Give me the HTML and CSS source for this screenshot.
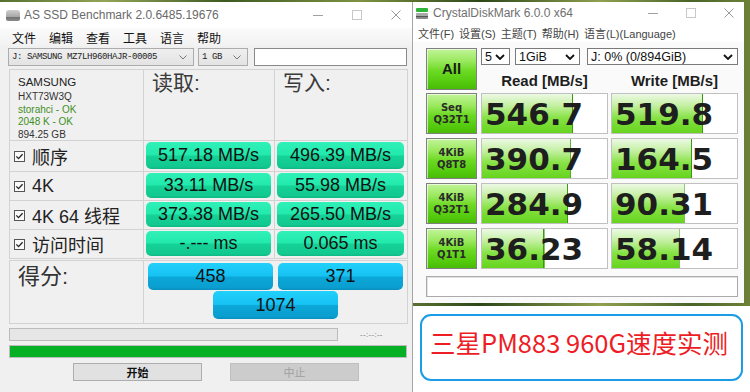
FILE: index.html
```html
<!DOCTYPE html>
<html>
<head>
<meta charset="utf-8">
<link rel="stylesheet" href="styles.css">
</head>
<body>
<div class="desktop">
  <div class="asssd">
    <div class="as-title">
      <span class="as-icon"></span>
      <span class="title">AS SSD Benchmark 2.0.6485.19676</span>
      <div class="controls">
        <span class="ctl-min"></span>
        <span class="ctl-max"></span>
        <svg class="ctl-close" viewBox="0 0 10 10" width="10" height="10"><path d="M0.5 0.5L9.5 9.5M9.5 0.5L0.5 9.5" stroke="#9a9a9a" stroke-width="1"/></svg>
      </div>
    </div>
    <div class="as-menu">
      <span>文件</span><span>编辑</span><span>查看</span><span>工具</span><span>语言</span><span>帮助</span>
    </div>
    <div class="as-tools">
      <div class="combo drive"><span>J: SAMSUNG MZ7LH960HAJR-00005</span><svg class="chev" viewBox="0 0 8 5" width="8" height="5"><path d="M0.5 0.5L4 4L7.5 0.5" fill="none" stroke="#777"/></svg></div>
      <div class="combo size"><span>1 GB</span><svg class="chev" viewBox="0 0 8 5" width="8" height="5"><path d="M0.5 0.5L4 4L7.5 0.5" fill="none" stroke="#777"/></svg></div>
      <div class="textbox"></div>
    </div>
    <div class="as-grid">
      <div class="cell info">
        <div class="i-model">SAMSUNG</div>
        <div class="i-line">HXT73W3Q</div>
        <div class="i-line ok">storahci - OK</div>
        <div class="i-line ok">2048 K - OK</div>
        <div class="i-line">894.25 GB</div>
      </div>
      <div class="cell head">读取:</div>
      <div class="cell head">写入:</div>

      <div class="cell label"><svg class="chk" viewBox="0 0 11 11" width="11" height="11"><rect x="0.5" y="0.5" width="10" height="10" fill="#fafafa" stroke="#555"/><path d="M2.3 5.4L4.5 7.6L8.6 3.2" fill="none" stroke="#222" stroke-width="1.3"/></svg><span>顺序</span></div>
      <div class="cell vcell"><div class="val">517.18 MB/s</div></div>
      <div class="cell vcell"><div class="val">496.39 MB/s</div></div>

      <div class="cell label"><svg class="chk" viewBox="0 0 11 11" width="11" height="11"><rect x="0.5" y="0.5" width="10" height="10" fill="#fafafa" stroke="#555"/><path d="M2.3 5.4L4.5 7.6L8.6 3.2" fill="none" stroke="#222" stroke-width="1.3"/></svg><span>4K</span></div>
      <div class="cell vcell"><div class="val">33.11 MB/s</div></div>
      <div class="cell vcell"><div class="val">55.98 MB/s</div></div>

      <div class="cell label"><svg class="chk" viewBox="0 0 11 11" width="11" height="11"><rect x="0.5" y="0.5" width="10" height="10" fill="#fafafa" stroke="#555"/><path d="M2.3 5.4L4.5 7.6L8.6 3.2" fill="none" stroke="#222" stroke-width="1.3"/></svg><span>4K 64 线程</span></div>
      <div class="cell vcell"><div class="val">373.38 MB/s</div></div>
      <div class="cell vcell"><div class="val">265.50 MB/s</div></div>

      <div class="cell label"><svg class="chk" viewBox="0 0 11 11" width="11" height="11"><rect x="0.5" y="0.5" width="10" height="10" fill="#fafafa" stroke="#555"/><path d="M2.3 5.4L4.5 7.6L8.6 3.2" fill="none" stroke="#222" stroke-width="1.3"/></svg><span>访问时间</span></div>
      <div class="cell vcell"><div class="val">-.--- ms</div></div>
      <div class="cell vcell"><div class="val">0.065 ms</div></div>
    </div>
    <div class="as-score">
      <div class="cell score-label">得分:</div>
      <div class="cell score-vals">
        <div class="sval">458</div>
        <div class="sval">371</div>
        <div class="sval total">1074</div>
      </div>
    </div>
    <div class="as-prog">
      <div class="pbar"></div>
      <span class="ptime">--:--:--</span>
    </div>
    <div class="greenbar"></div>
    <div class="as-btns">
      <div class="btn">开始</div>
      <div class="btn disabled">中止</div>
    </div>
  </div>

  <div class="right">
    <div class="cdm-wrap">
      <div class="cdm">
        <div class="cdm-title">
          <span class="cdm-icon"><span class="ci-top"></span><span class="ci-bot"></span></span>
          <span class="title">CrystalDiskMark 6.0.0 x64</span>
          <div class="controls cdm-ctl">
            <span class="ctl-min"></span>
            <span class="ctl-max"></span>
            <svg class="ctl-close" viewBox="0 0 10 10" width="10" height="10"><path d="M0.5 0.5L9.5 9.5M9.5 0.5L0.5 9.5" stroke="#9a9a9a" stroke-width="1"/></svg>
          </div>
        </div>
        <div class="cdm-menu">
          <span>文件(F)</span><span>设置(S)</span><span>主题(T)</span><span>帮助(H)</span><span>语言(L)(Language)</span>
        </div>
        <div class="cdm-body">
          <div class="tbtn all">All</div>
          <div class="top-right">
            <div class="drops">
              <div class="drop d-count"><span>5</span><svg class="dchev" viewBox="0 0 10 6" width="10" height="6"><path d="M1 1L5 5L9 1" fill="none" stroke="#111" stroke-width="1.8"/></svg></div>
              <div class="drop d-size"><span>1GiB</span><svg class="dchev" viewBox="0 0 10 6" width="10" height="6"><path d="M1 1L5 5L9 1" fill="none" stroke="#111" stroke-width="1.8"/></svg></div>
              <div class="drop d-drive"><span>J: 0% (0/894GiB)</span><svg class="dchev" viewBox="0 0 10 6" width="10" height="6"><path d="M1 1L5 5L9 1" fill="none" stroke="#111" stroke-width="1.8"/></svg></div>
            </div>
            <div class="hdrs">
              <div class="hdr">Read [MB/s]</div>
              <div class="hdr">Write [MB/s]</div>
            </div>
          </div>

          <div class="tbtn"><span>Seq</span><span>Q32T1</span></div>
          <div class="res" style="--w:73%"><span class="num">546.7</span></div>
          <div class="res" style="--w:73%"><span class="num">519.8</span></div>

          <div class="tbtn"><span>4KiB</span><span>Q8T8</span></div>
          <div class="res" style="--w:71%"><span class="num">390.7</span></div>
          <div class="res" style="--w:64%"><span class="num">164.5</span></div>

          <div class="tbtn"><span>4KiB</span><span>Q32T1</span></div>
          <div class="res" style="--w:69%"><span class="num">284.9</span></div>
          <div class="res" style="--w:58%"><span class="num">90.31</span></div>

          <div class="tbtn"><span>4KiB</span><span>Q1T1</span></div>
          <div class="res" style="--w:50%"><span class="num">36.23</span></div>
          <div class="res" style="--w:54%"><span class="num">58.14</span></div>

          <div class="comment"></div>
        </div>
      </div>
    </div>
    <div class="cap-area">
      <div class="caption">三星PM883 960G速度实测</div>
    </div>
  </div>
</div>
</body>
</html>
```

FILE: styles.css
```css
* { box-sizing: border-box; }

body {
  margin: 0;
  width: 750px;
  height: 392px;
  overflow: hidden;
  background: #fff;
  font-family: "Liberation Sans", "Noto Sans CJK SC", sans-serif;
  color: #111;
}

.desktop {
  display: flex;
  height: 392px;
  padding-top: 2px;
  background: linear-gradient(90deg, #56712f 0%, #93a456 14%, #3e5a21 30%, #7f9242 48%, #2d4719 64%, #90a050 80%, #4a6428 92%, #6d8238 100%);
}

/* ---------- AS SSD ---------- */
.asssd {
  width: 413px;
  height: 390px;
  background: #f0f0f0;
  border-right: 1px solid #a5a5a5;
  display: flex;
  flex-direction: column;
  flex: none;
}

.as-title {
  height: 26px;
  background: #fff;
  display: flex;
  align-items: center;
  flex: none;
}

.as-icon {
  width: 14px;
  height: 11px;
  margin-left: 6px;
  border-radius: 3px 3px 2px 2px;
  background: linear-gradient(#cfcfcf, #a8a8a8 60%, #6f6f6f 61%, #8a8a8a);
}

.as-title .title {
  margin-left: 4px;
  font-size: 12px;
  color: #6a6a6a;
}

.controls {
  margin-left: auto;
  margin-right: 11px;
  display: flex;
  align-items: center;
  gap: 29px;
}

.ctl-min {
  width: 10px;
  height: 1px;
  background: #a0a0a0;
}

.ctl-max {
  width: 10px;
  height: 10px;
  border: 1px solid #c8c8c8;
}

.ctl-close { display: block; }

.as-menu {
  height: 18px;
  display: flex;
  align-items: center;
  gap: 13px;
  padding-left: 12px;
  font-size: 12px;
  color: #111;
  background: linear-gradient(#fbfbfb, #f2f2f2);
  flex: none;
}

.as-tools {
  display: flex;
  height: 18px;
  margin: 2px 0 0 8px;
  flex: none;
}

.combo {
  height: 18px;
  border: 1px solid #acacac;
  background: linear-gradient(#efefef, #e3e3e3);
  display: flex;
  align-items: center;
  justify-content: space-between;
  padding: 0 6px 0 3px;
  font-family: "Liberation Mono", monospace;
  font-size: 9px;
  letter-spacing: -0.4px;
  color: #222;
}

.combo.drive { width: 186px; }
.combo.size { width: 50px; margin-left: 4px; }

.textbox {
  width: 153px;
  height: 18px;
  margin-left: 6px;
  border: 1px solid #8a8a8a;
  background: #fff;
}

.as-grid {
  width: 399px;
  margin: 3px 0 0 9px;
  display: grid;
  grid-template-columns: 133px 130px 132px;
  grid-template-rows: 70px 30px 28px 28px 28px;
  gap: 1px;
  padding: 1px;
  background: #d2d2d2;
  flex: none;
}

.cell { background: #f0f0f0; }

.info {
  padding: 5px 0 0 8px;
  color: #222;
}

.i-model {
  font-size: 11.5px;
  line-height: 14px;
  margin-bottom: 2px;
}

.i-line {
  font-size: 10px;
  line-height: 12.5px;
  color: #333;
}

.i-line.ok { color: #3f8f1f; }

.head {
  padding: 1px 0 0 8px;
  font-size: 21px;
  line-height: 24px;
  color: #3a3a3a;
}

.label {
  display: flex;
  align-items: center;
  padding-left: 4px;
  gap: 7px;
  font-size: 18px;
  color: #222;
}

.chk { display: block; flex: none; }

.vcell { padding: 1px 3px 2px 2px; }

.val {
  height: 100%;
  border-radius: 5px;
  background: linear-gradient(#30f1b8 0%, #22e9ac 48%, #15d297 52%, #12c990 90%, #10b883 100%);
  display: flex;
  align-items: center;
  justify-content: center;
  font-size: 18px;
  color: #111;
}

.as-score {
  width: 399px;
  height: 64px;
  margin: 1px 0 0 9px;
  display: grid;
  grid-template-columns: 133px 263px;
  gap: 1px;
  padding: 1px;
  background: #d2d2d2;
  flex: none;
}

.score-label {
  padding: 2px 0 0 8px;
  font-size: 22px;
  line-height: 28px;
  color: #333;
}

.score-vals {
  display: grid;
  grid-template-columns: 125px 125px;
  grid-template-rows: 27px 28px;
  column-gap: 5px;
  row-gap: 1px;
  padding: 2px 4px 0;
}

.sval {
  border-radius: 5px;
  background: linear-gradient(#22d0fb 0%, #16c2f3 48%, #0ba7d8 52%, #0a9fd0 90%, #098fbe 100%);
  display: flex;
  align-items: center;
  justify-content: center;
  font-size: 18px;
  color: #111;
}

.sval.total {
  grid-column: 1 / -1;
  justify-self: center;
  width: 125px;
}

.as-prog {
  display: flex;
  align-items: center;
  height: 13px;
  margin: 4px 0 0 9px;
  flex: none;
}

.pbar {
  width: 329px;
  height: 13px;
  border: 1px solid #bcbcbc;
  background: #e6e6e6;
}

.ptime {
  margin-left: 22px;
  font-size: 8px;
  color: #777;
  letter-spacing: 0.3px;
}

.greenbar {
  width: 398px;
  height: 13px;
  margin: 4px 0 0 9px;
  border: 1px solid #bcbcbc;
  background: #06b025;
  flex: none;
}

.as-btns {
  display: flex;
  gap: 28px;
  margin: 5px 0 0 73px;
  flex: none;
}

.btn {
  width: 129px;
  height: 18px;
  border: 1px solid #adadad;
  background: #e1e1e1;
  display: flex;
  align-items: center;
  justify-content: center;
  font-size: 11px;
  font-weight: bold;
  color: #111;
}

.btn.disabled {
  background: #cccccc;
  border-color: #bfbfbf;
  color: #a0a0a0;
  font-weight: normal;
}

/* ---------- right column ---------- */
.right {
  width: 337px;
  display: flex;
  flex-direction: column;
  flex: none;
}

.cdm-wrap {
  display: flex;
  padding-bottom: 3px;
  flex: none;
}

.cdm {
  width: 331px;
  height: 301px;
  background: #fafafa;
  display: flex;
  flex-direction: column;
}

.cdm-title {
  height: 22px;
  background: #fff;
  display: flex;
  align-items: center;
  flex: none;
}

.cdm-icon {
  width: 12px;
  margin-left: 3px;
  display: flex;
  flex-direction: column;
  gap: 1px;
}

.ci-top {
  height: 4px;
  background: #2fb53a;
  border-radius: 1px;
}

.ci-bot {
  height: 6px;
  background: linear-gradient(#a9a9a9 50%, #555 51%, #555 70%, #8a8a8a 71%);
  border-radius: 1px;
}

.cdm-title .title {
  margin-left: 5px;
  font-size: 12px;
  color: #6f6f6f;
}

.cdm-ctl {
  gap: 28px;
  margin-right: 10px;
}

.cdm-menu {
  height: 18px;
  display: flex;
  align-items: center;
  gap: 5px;
  padding-left: 5px;
  font-size: 11px;
  color: #444;
  background: #fff;
  flex: none;
}

.cdm-body {
  display: grid;
  grid-template-columns: 52px 127px 127px;
  grid-template-rows: 41px 41px 41px 41px 41px 24px;
  column-gap: 3px;
  row-gap: 4px;
  padding: 6px 0 0 13px;
}

.tbtn {
  width: 51px;
  border: 1px solid #808080;
  background: linear-gradient(#c2f49a 0%, #9ae95e 30%, #6cd923 55%, #52c90c 85%, #4abb08 100%);
  box-shadow: inset 1px 1px 0 rgba(255,255,255,0.6);
  display: flex;
  flex-direction: column;
  align-items: center;
  justify-content: center;
  font-family: "DejaVu Sans", sans-serif;
  font-weight: bold;
  font-size: 10px;
  line-height: 12px;
  color: #2a2a2a;
}

.tbtn.all {
  height: 42px;
  font-family: "Liberation Sans", sans-serif;
  font-size: 15px;
  color: #1a1a1a;
}

.top-right {
  grid-column: 2 / 4;
  display: flex;
  flex-direction: column;
}

.drops {
  display: flex;
  height: 17px;
}

.drop {
  height: 17px;
  border: 1px solid #7a7a7a;
  background: #fff;
  display: flex;
  align-items: center;
  justify-content: space-between;
  padding: 0 4px 0 3px;
  font-size: 12.5px;
  color: #111;
}

.d-count { width: 29px; }
.d-size { width: 65px; margin-left: 5px; }
.d-drive { width: 151px; margin-left: 7px; }

.dchev { display: block; }

.hdrs {
  display: grid;
  grid-template-columns: 127px 127px;
  column-gap: 3px;
  padding-top: 7px;
}

.hdr {
  text-align: center;
  font-weight: bold;
  font-size: 15px;
  line-height: 18px;
  color: #1e1e1e;
}

.res {
  border: 1px solid #c0c0c0;
  background-color: #fff;
  background-image:
    linear-gradient(90deg, transparent calc(100% - 1px), #3b9a12 calc(100% - 1px)),
    linear-gradient(#edf9e4 0%, #c4f0a2 30%, #86e244 62%, #66d41e 100%);
  background-size: var(--w) 100%;
  background-repeat: no-repeat;
  display: flex;
  align-items: center;
  padding-left: 3px;
}

.num {
  font-family: "DejaVu Sans", sans-serif;
  font-weight: bold;
  font-size: 31px;
  line-height: 36px;
  color: #1e1e1e;
}

.comment {
  grid-column: 1 / -1;
  margin-top: 3px;
  border: 1px solid #ababab;
  background: #fff;
  box-shadow: inset 1px 1px 0 #e2e2e2;
}

.cap-area {
  flex: 1;
  background: #fff;
  padding: 8px 7px 0;
}

.caption {
  height: 67px;
  border: 2px solid #1a9ce6;
  border-radius: 11px;
  padding: 11px 0 0 8px;
  font-family: "Noto Sans CJK SC", sans-serif;
  font-size: 25.5px;
  line-height: 30px;
  color: #ee1c25;
  white-space: nowrap;
}
```
